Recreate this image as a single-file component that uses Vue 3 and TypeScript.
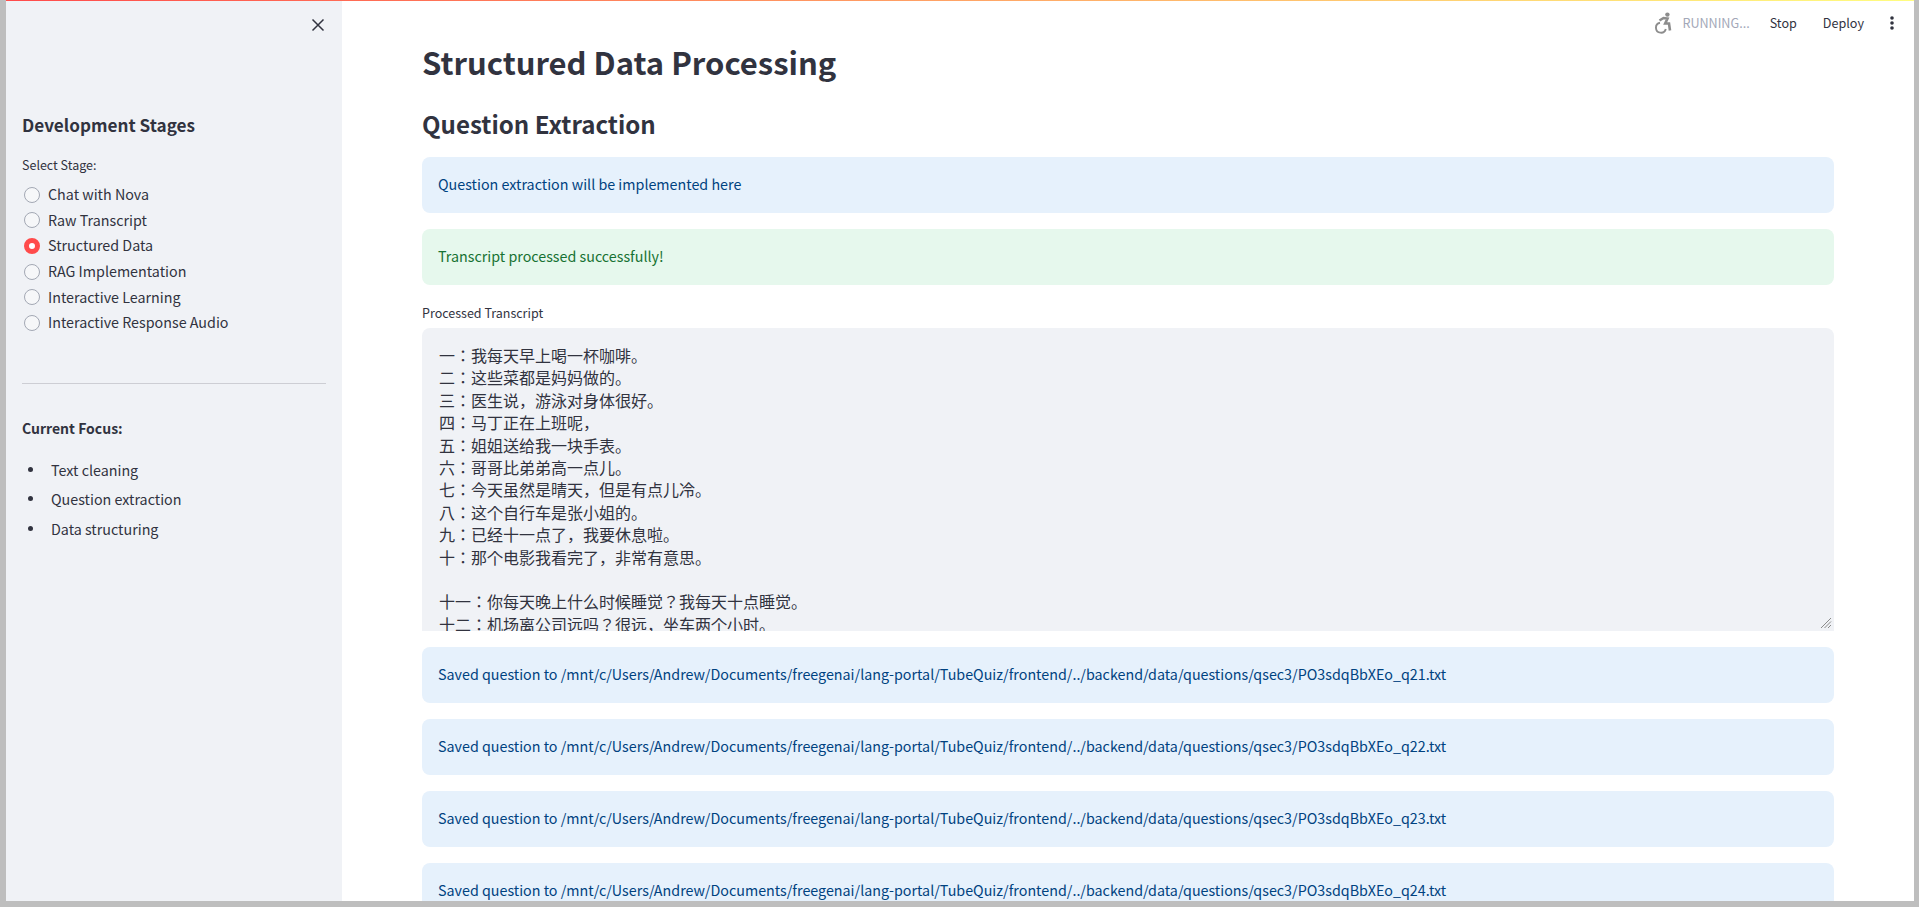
<script setup lang="ts">
const stages: string[] = ['Chat with Nova', 'Raw Transcript', 'Structured Data', 'RAG Implementation', 'Interactive Learning', 'Interactive Response Audio']
const focus: string[] = ['Text cleaning', 'Question extraction', 'Data structuring']
const transcript: string[] = [
  '一：我每天早上喝一杯咖啡。', '二：这些菜都是妈妈做的。', '三：医生说，游泳对身体很好。', '四：马丁正在上班呢，',
  '五：姐姐送给我一块手表。', '六：哥哥比弟弟高一点儿。', '七：今天虽然是晴天，但是有点儿冷。', '八：这个自行车是张小姐的。',
  '九：已经十一点了，我要休息啦。', '十：那个电影我看完了，非常有意思。', ' ', '十一：你每天晚上什么时候睡觉？我每天十点睡觉。', '十二：机场离公司远吗？很远，坐车两个小时。',
]
const saved: number[] = [21, 22, 23, 24]
</script>

<template>
  <div class="frame">
    <div class="app">
      <div class="deco"></div>
      <aside class="sidebar">
        <div class="side-top">
          <svg class="close" viewBox="0 0 14 14" width="14" height="14" aria-hidden="true"><path d="M1.5 1.5 12.5 12.5M12.5 1.5 1.5 12.5" stroke="#31333f" stroke-width="1.5" fill="none" /></svg>
        </div>
        <h3 class="side-title">Development Stages</h3>
        <div class="side-label">Select Stage:</div>
        <div class="radios">
          <div v-for="(s, i) in stages" :key="s" class="radio">
            <span class="dot" :class="{ on: i === 2 }"></span>
            <span>{{ s }}</span>
          </div>
        </div>
        <hr class="rule" />
        <div class="focus-title">Current Focus:</div>
        <ul class="focus">
          <li v-for="f in focus" :key="f">{{ f }}</li>
        </ul>
      </aside>
      <main class="main">
        <div class="toolbar">
          <svg class="wheel" viewBox="0 0 18 22" width="18" height="22" aria-hidden="true">
            <circle cx="13.4" cy="2.6" r="2.2" fill="#8d8d8d" />
            <path d="M5.5 8.5 9.5 6 13.5 6.5 11.2 11.5 15 11.5 16 18.5" stroke="#8d8d8d" stroke-width="2.6" fill="none" />
            <path d="M6 10.8A5 5 0 1 0 11.8 17" stroke="#8d8d8d" stroke-width="1.9" fill="none" />
          </svg>
          <span class="running">RUNNING...</span>
          <span class="tool stop">Stop</span>
          <span class="tool deploy">Deploy</span>
          <svg class="more" viewBox="0 0 6 16" width="6" height="16" aria-hidden="true"><circle cx="3" cy="3" r="1.8" fill="#31333f" /><circle cx="3" cy="8" r="1.8" fill="#31333f" /><circle cx="3" cy="13" r="1.8" fill="#31333f" /></svg>
        </div>
        <div class="content">
          <h1>Structured Data Processing</h1>
          <h2>Question Extraction</h2>
          <div class="alert info">Question extraction will be implemented here</div>
          <div class="alert ok">Transcript processed successfully!</div>
          <div class="field">
            <label>Processed Transcript</label>
            <div class="area">
              <div v-for="(t, i) in transcript" :key="i" class="line">{{ t }}</div>
              <svg class="grip" viewBox="0 0 12 12" width="12" height="12" aria-hidden="true"><path d="M1 11 11 1M4.5 11 11 4.5M8 11 11 8" stroke="#8a8a8a" stroke-width="1" fill="none" /></svg>
            </div>
          </div>
          <div v-for="n in saved" :key="n" class="alert info">Saved question to /mnt/c/Users/Andrew/Documents/freegenai/lang-portal/TubeQuiz/frontend/../backend/data/questions/qsec3/PO3sdqBbXEo_q{{ n }}.txt</div>
        </div>
      </main>
    </div>
  </div>
</template>

<style>
html, body { margin: 0; padding: 0; overflow: hidden; }
</style>

<style scoped>
.frame {
  box-sizing: border-box;
  width: 1919px;
  height: 907px;
  padding: 0 5px 6px 6px;
  background: #bebebe;
  font-family: "Noto Sans CJK SC", "Noto Sans", sans-serif;
  color: #31333f;
}
.app { position: relative; display: flex; height: 100%; background: #fff; overflow: hidden; }
.deco { position: absolute; top: 0; left: 0; right: 0; height: 1px; background: linear-gradient(90deg, #ff4b4b, #fffd80); z-index: 2; }
.sidebar { flex: 0 0 336px; box-sizing: border-box; background: #f0f2f6; padding: 0 16px; font-size: 14.3px; }
.side-top { height: 50px; display: flex; justify-content: flex-end; align-items: flex-start; padding-top: 18px; box-sizing: border-box; }
.close { margin-right: 1px; }
.side-title { margin: 62px 0 0; font-size: 17.15px; line-height: 26px; font-weight: 600; }
.side-label { margin-top: 17px; font-size: 12.5px; line-height: 20px; }
.radios { margin-top: 6px; }
.radio { display: flex; align-items: center; gap: 8px; height: 25.6px; }
.dot { box-sizing: border-box; flex: none; width: 16px; height: 16px; margin: 2px 0 0 2px; border-radius: 50%; background: #f6f7f9; border: 1px solid #a3a8b4; }
.dot.on { background: #fff; border: 5px solid #ff4b4b; }
.rule { border: 0; border-top: 1px solid #cdced4; margin: 48px 0 0; }
.focus-title { margin-top: 32px; font-size: 14px; line-height: 25px; font-weight: 600; }
.focus { margin: 16px 0 0; padding: 0; list-style: none; }
.focus li { display: flex; align-items: center; gap: 18px; height: 25.6px; margin-bottom: 4px; }
.focus li::before { content: ""; flex: none; width: 5px; height: 5px; margin-left: 6px; border-radius: 50%; background: #31333f; }
.main { position: relative; flex: 1; min-width: 0; }
.toolbar { position: absolute; top: 11px; right: 19px; display: flex; align-items: center; height: 24px; font-size: 12.6px; z-index: 1; }
.running, .tool { padding-bottom: 2px; }
.running { margin-left: 10px; color: #a3a8b8; }
.stop { margin-left: 20px; }
.deploy { margin-left: 26px; }
.more { margin-left: 25px; }
.content { padding: 37px 80px 0; display: flex; flex-direction: column; gap: 16px; }
h1 { margin: 0; font-size: 31px; line-height: 50px; font-weight: 600; }
h2 { margin: 1px 0 -3px; font-size: 24.1px; line-height: 40px; font-weight: 600; }
.alert { box-sizing: border-box; flex: none; height: 56px; padding: 16px; border-radius: 8px; font-size: 14.3px; line-height: 21px; }
.info { background: #e6f1fc; color: #004280; }
.ok { background: #e6f8ed; color: #177233; }
.field label { display: block; font-size: 12.5px; line-height: 23px; margin-bottom: 4px; }
.area { position: relative; box-sizing: border-box; height: 303px; padding: 16px 16px 0 17px; border-radius: 8px 8px 0 0; background: #f0f2f6; overflow: hidden; font-family: "Noto Sans CJK JP", sans-serif; font-size: 16px; }
.line { line-height: 22.4px; height: 22.4px; white-space: pre; }
.grip { position: absolute; right: 2px; bottom: 2px; }
</style>
